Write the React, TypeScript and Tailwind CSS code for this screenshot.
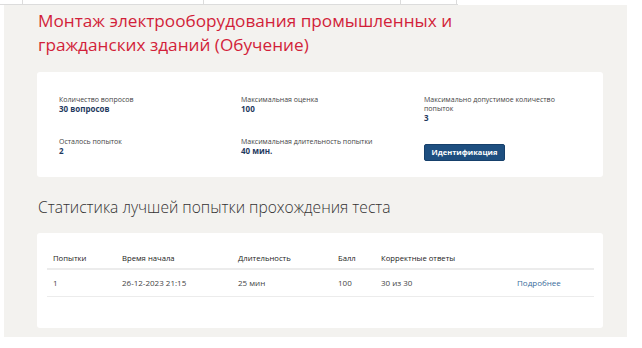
import React from "react";

const font = { fontFamily: '"Open Sans", "Noto Sans", sans-serif' };

function Field({ label, value }: { label: React.ReactNode; value: string }) {
  return (
    <div className="flex flex-col">
      <div className="text-[7px] leading-[9px] text-[#444]">{label}</div>
      <div className="text-[8px] leading-[9px] font-bold text-[#1f3a5f]">{value}</div>
    </div>
  );
}

export default function App() {
  const cols = ["w-[69px]", "w-[116px]", "w-[100px]", "w-[43px]", "w-[136px]", "flex-1"];
  const head = ["Попытки", "Время начала", "Длительность", "Балл", "Корректные ответы", ""];
  const row = ["1", "26-12-2023 21:15", "25 мин", "100", "30 из 30", "Подробнее"];
  return (
    <div className="w-[642px] h-[348px] bg-white overflow-hidden" style={font}>
      <div className="flex h-[5px] w-[458px] border-b border-[#dcdcdc]">
        <div className="w-[23px] border-r border-[#dcdcdc]" />
        <div className="w-[181px] border-r border-[#dcdcdc]" />
        <div className="w-[197px] border-r border-[#dcdcdc]" />
        <div className="w-[56px] border-r border-[#dcdcdc]" />
      </div>
      <div className="ml-[4px] w-[623px] h-[332px] bg-[#f3f2ef] pl-[33px] pr-[24px] pt-[4px]">
        <h1 className="pl-[1px] text-[17.2px] leading-[24px] text-[#d21f3a] font-medium">
          Монтаж электрооборудования промышленных и
          <br />
          гражданских зданий (Обучение)
        </h1>
        <div className="mt-[15px] h-[105px] bg-white rounded-[3px] pl-[22px] pt-[23px]">
          <div className="grid grid-cols-[182px_183px_150px] gap-y-[15px]">
            <Field label="Количество вопросов" value="30 вопросов" />
            <Field label="Максимальная оценка" value="100" />
            <Field label={<>Максимально допустимое количество<br />попыток</>} value="3" />
            <Field label="Осталось попыток" value="2" />
            <Field label="Максимальная длительность попытки" value="40 мин." />
            <div>
              <button className="w-[81px] h-[17px] rounded-[2px] bg-[#1e4f80] border border-[#16406b] text-white text-[7.5px] font-bold leading-[15px]">
                Идентификация
              </button>
            </div>
          </div>
        </div>
        <h2 className="mt-[20px] pl-[1px] text-[15.6px] leading-[20px] font-light text-[#333]">
          Статистика лучшей попытки прохождения теста
        </h2>
        <div className="mt-[16px] h-[95px] bg-white rounded-[3px] pl-[10px] pr-[9px] pt-[16px]">
          <div className="flex h-[21px] border-b-2 border-[#ececec] items-center">
            {head.map((h, i) => (
              <div key={i} className={`${cols[i]} pl-[6px] text-[7.7px] font-medium text-[#222]`}>
                {h}
              </div>
            ))}
          </div>
          <div className="flex h-[27px] border-b border-[#ececec] items-center">
            {row.map((c, i) => (
              <div
                key={i}
                className={`${cols[i]} pl-[6px] text-[8px] ${i === 5 ? "text-[#3a6c9c]" : "text-[#444]"}`}
              >
                {c}
              </div>
            ))}
          </div>
        </div>
      </div>
    </div>
  );
}
